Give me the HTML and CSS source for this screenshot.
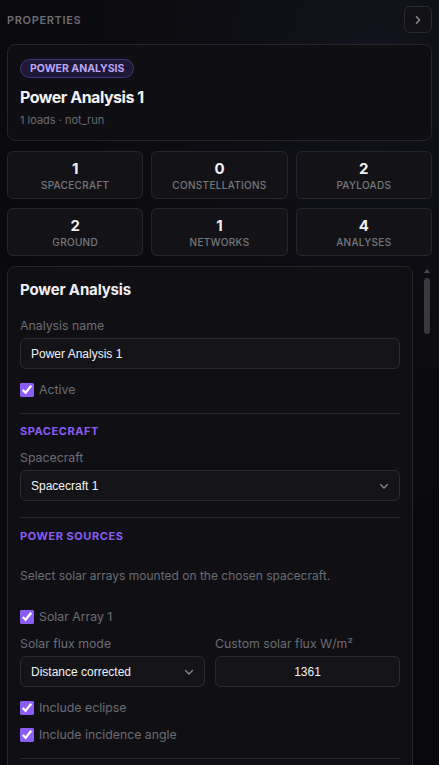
FILE: index.html
```html
<!DOCTYPE html>
<html lang="en">
<head>
<meta charset="utf-8">
<title>Properties</title>
<link rel="stylesheet" href="styles.css">
</head>
<body>
<div class="panel">
  <header class="panel-head">
    <span class="panel-title">PROPERTIES</span>
    <button class="collapse-btn" type="button" aria-label="Collapse">
      <svg width="8" height="10" viewBox="0 0 8 10"><path d="M2.5 1.8 L5.5 5 L2.5 8.2" fill="none" stroke="#8a8a92" stroke-width="1.5" stroke-linecap="round" stroke-linejoin="round"/></svg>
    </button>
  </header>

  <section class="summary-card">
    <span class="badge">POWER ANALYSIS</span>
    <h1 class="summary-title">Power Analysis 1</h1>
    <p class="summary-sub">1 loads · not_run</p>
  </section>

  <section class="stats">
    <div class="stat"><span class="stat-num">1</span><span class="stat-label">SPACECRAFT</span></div>
    <div class="stat"><span class="stat-num">0</span><span class="stat-label">CONSTELLATIONS</span></div>
    <div class="stat"><span class="stat-num">2</span><span class="stat-label">PAYLOADS</span></div>
    <div class="stat"><span class="stat-num">2</span><span class="stat-label">GROUND</span></div>
    <div class="stat"><span class="stat-num">1</span><span class="stat-label">NETWORKS</span></div>
    <div class="stat"><span class="stat-num">4</span><span class="stat-label">ANALYSES</span></div>
  </section>

  <div class="scroll-area">
    <div class="scroll">
      <section class="form-card">
        <h2 class="form-title">Power Analysis</h2>

        <div class="field">
          <label class="field-label">Analysis name</label>
          <div class="input">Power Analysis 1</div>
        </div>

        <label class="check"><input type="checkbox" checked><span>Active</span></label>

        <hr class="divider">

        <h3 class="section-head">SPACECRAFT</h3>
        <div class="field">
          <label class="field-label">Spacecraft</label>
          <div class="input select"><span>Spacecraft 1</span>
            <svg width="12" height="8" viewBox="0 0 12 8"><path d="M2.5 2.5 L6 6 L9.5 2.5" fill="none" stroke="#8a8a92" stroke-width="1.3" stroke-linecap="round" stroke-linejoin="round"/></svg>
          </div>
        </div>

        <hr class="divider second">

        <h3 class="section-head">POWER SOURCES</h3>
        <p class="desc">Select solar arrays mounted on the chosen spacecraft.</p>

        <label class="check solar"><input type="checkbox" checked><span>Solar Array 1</span></label>

        <div class="two-col">
          <div class="field">
            <label class="field-label">Solar flux mode</label>
            <div class="input select"><span>Distance corrected</span>
              <svg width="12" height="8" viewBox="0 0 12 8"><path d="M2.5 2.5 L6 6 L9.5 2.5" fill="none" stroke="#8a8a92" stroke-width="1.3" stroke-linecap="round" stroke-linejoin="round"/></svg>
            </div>
          </div>
          <div class="field">
            <label class="field-label">Custom solar flux W/m²</label>
            <div class="input center">1361</div>
          </div>
        </div>

        <label class="check eclipse"><input type="checkbox" checked><span>Include eclipse</span></label>
        <label class="check tight"><input type="checkbox" checked><span>Include incidence angle</span></label>

        <hr class="divider">
      </section>
    </div>
    <div class="scrollbar" aria-hidden="true">
      <span class="scroll-arrow"></span>
      <span class="scroll-thumb"></span>
    </div>
  </div>
</div>
</body>
</html>
```

FILE: styles.css
```css
* { box-sizing: border-box; }

html, body {
  margin: 0;
  height: 100%;
}

body {
  background: radial-gradient(ellipse 90% 60% at 85% 8%, #12131c 0%, #0c0c11 55%, #0a0a0d 100%);
  color: #ececf0;
  font-family: Inter, "Noto Sans", sans-serif;
  overflow: hidden;
}

.panel {
  height: 100vh;
  display: flex;
  flex-direction: column;
  padding: 6px 7px 0 7px;
}

.panel-head {
  display: flex;
  align-items: center;
  justify-content: space-between;
  height: 27px;
  margin-bottom: 11px;
  flex-shrink: 0;
}

.panel-title {
  font-size: 11px;
  font-weight: 600;
  letter-spacing: 0.06em;
  color: #6c6c74;
}

.collapse-btn {
  width: 28px;
  height: 27px;
  border: 1px solid #2a2a31;
  border-radius: 6px;
  background: #111116;
  display: flex;
  align-items: center;
  justify-content: center;
  padding: 0;
}

.summary-card {
  flex-shrink: 0;
  border: 1px solid #25252b;
  border-radius: 8px;
  background: #0f0f13;
  padding: 14px 12px 13px;
  display: flex;
  flex-direction: column;
  align-items: flex-start;
}

.badge {
  display: block;
  font-size: 10.5px;
  font-weight: 700;
  letter-spacing: 0;
  color: #b9a5f6;
  background: #1f1836;
  border: 1px solid #43357a;
  border-radius: 10px;
  padding: 2px 9px;
  line-height: 13px;
}

.summary-title {
  margin: 8px 0 0;
  font-size: 16px;
  font-weight: 700;
  letter-spacing: -0.03em;
  line-height: 22px;
  color: #f2f2f5;
}

.summary-sub {
  margin: 5px 0 0;
  font-size: 11px;
  line-height: 14px;
  color: #6a6a72;
}

.stats {
  flex-shrink: 0;
  margin-top: 10px;
  display: grid;
  grid-template-columns: repeat(3, 1fr);
  gap: 9px 8px;
}

.stat {
  height: 48px;
  border: 1px solid #26262c;
  border-radius: 6px;
  background: #131317;
  display: flex;
  flex-direction: column;
  align-items: center;
  padding-top: 8px;
}

.stat-num {
  font-size: 15px;
  font-weight: 700;
  line-height: 18px;
  color: #f0f0f3;
}

.stat-label {
  font-size: 10px;
  font-weight: 500;
  letter-spacing: 0.03em;
  line-height: 13px;
  margin-top: 1px;
  color: #77777f;
}

.scroll-area {
  position: relative;
  margin-top: 10px;
  flex: 1;
  min-height: 0;
}

.scroll {
  height: 100%;
  overflow-y: auto;
  scrollbar-width: none;
  padding-right: 19px;
}

.scrollbar {
  position: absolute;
  top: 0;
  right: 0;
  bottom: 0;
  width: 15px;
}

.scroll-arrow {
  position: absolute;
  top: 3px;
  right: 2px;
  width: 0;
  height: 0;
  border-left: 3px solid transparent;
  border-right: 3px solid transparent;
  border-bottom: 4px solid #4a4a50;
}

.scroll-thumb {
  position: absolute;
  top: 12px;
  right: 2px;
  width: 6px;
  height: 56px;
  border-radius: 3px;
  background: #38383e;
}

.form-card {
  border: 1px solid #26262c;
  border-radius: 8px;
  background: #101014;
  padding: 13px 12px 40px;
}

.form-title {
  margin: 0;
  font-size: 15px;
  font-weight: 700;
  letter-spacing: -0.01em;
  line-height: 20px;
  color: #f0f0f3;
}

.field {
  display: flex;
  flex-direction: column;
}

.form-title + .field { margin-top: 18px; }

.field-label {
  font-size: 12.3px;
  line-height: 16px;
  color: #6c6c74;
  margin-bottom: 4px;
}

.input {
  height: 31px;
  border: 1px solid #2a2a30;
  border-radius: 6px;
  background: #141418;
  display: flex;
  align-items: center;
  padding: 0 10px;
  font-family: "Liberation Sans", Arial, sans-serif;
  font-size: 12px;
  font-weight: 500;
  color: #f2f2f5;
}

.select {
  justify-content: space-between;
  padding-right: 9px;
}

.center { justify-content: center; }

.check {
  display: flex;
  align-items: center;
  gap: 5px;
  margin-top: 13px;
  font-size: 12.3px;
  line-height: 16px;
  color: #6c6c74;
}

.check.tight { margin-top: 11px; }

.check input {
  margin: 0;
  width: 14px;
  height: 14px;
  accent-color: #8b5cf6;
}

.divider {
  border: 0;
  border-top: 1px solid #27272d;
  margin: 15px 0 10px;
}

.divider.second { margin: 16px 0 11px; }

.section-head {
  margin: 0;
  font-size: 11px;
  font-weight: 700;
  letter-spacing: 0.05em;
  line-height: 14px;
  color: #8b5cf6;
}

.section-head + .field { margin-top: 12px; }

.desc {
  margin: 25px 0 0;
  font-size: 12px;
  line-height: 16px;
  color: #6c6c74;
}

.check.solar { margin-top: 25px; }

.two-col {
  margin-top: 11px;
  display: grid;
  grid-template-columns: 1fr 1fr;
  gap: 10px;
}

.two-col .field-label { margin-bottom: 4px; }

.check.eclipse { margin-top: 13px; }
```
